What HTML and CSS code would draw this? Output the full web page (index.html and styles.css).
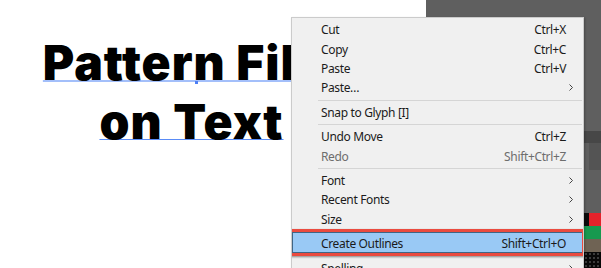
FILE: index.html
```html
<!DOCTYPE html>
<html lang="en">
  <head>
    <meta charset="UTF-8" />
    <meta name="viewport" content="width=device-width, initial-scale=1.0" />
    <title>Create Outlines</title>
    <link rel="stylesheet" href="styles.css">
  </head>
  <body>
    <div class="workspace">
      <div class="canvas">
        <h1 class="title">
          <span class="title-line first">Pattern Fills<i class="anchor"></i></span>
          <span class="title-line">on Text</span>
        </h1>
      </div>

      <div class="panel">
        <div class="panel-bar"></div>
        <div class="panel-box"></div>
        <div class="swatches">
          <div class="swatch-row"><span class="swatch black"></span><span class="swatch red"></span></div>
          <div class="swatch-row"><span class="swatch green"></span></div>
          <div class="swatch-row"><span class="swatch taupe"></span></div>
          <div class="swatch-row"><span class="swatch dots"></span></div>
        </div>
      </div>

      <ul class="context-menu">
        <li class="menu-item"><span class="label">Cut</span><span class="shortcut">Ctrl+X</span><span class="more"></span></li>
        <li class="menu-item"><span class="label">Copy</span><span class="shortcut">Ctrl+C</span><span class="more"></span></li>
        <li class="menu-item"><span class="label">Paste</span><span class="shortcut">Ctrl+V</span><span class="more"></span></li>
        <li class="menu-item"><span class="label">Paste…</span><span class="more"><svg width="4" height="7" viewBox="0 0 4 7"><path d="M0.5 0.5 L3.5 3.5 L0.5 6.5" /></svg></span></li>
        <li class="separator"></li>
        <li class="menu-item"><span class="label">Snap to Glyph [I]</span><span class="more"></span></li>
        <li class="separator"></li>
        <li class="menu-item"><span class="label">Undo Move</span><span class="shortcut">Ctrl+Z</span><span class="more"></span></li>
        <li class="menu-item disabled"><span class="label">Redo</span><span class="shortcut">Shift+Ctrl+Z</span><span class="more"></span></li>
        <li class="separator"></li>
        <li class="menu-item"><span class="label">Font</span><span class="more"><svg width="4" height="7" viewBox="0 0 4 7"><path d="M0.5 0.5 L3.5 3.5 L0.5 6.5" /></svg></span></li>
        <li class="menu-item"><span class="label">Recent Fonts</span><span class="more"><svg width="4" height="7" viewBox="0 0 4 7"><path d="M0.5 0.5 L3.5 3.5 L0.5 6.5" /></svg></span></li>
        <li class="menu-item"><span class="label">Size</span><span class="more"><svg width="4" height="7" viewBox="0 0 4 7"><path d="M0.5 0.5 L3.5 3.5 L0.5 6.5" /></svg></span></li>
        <li class="separator"></li>
        <li class="menu-item active"><span class="label">Create Outlines</span><span class="shortcut">Shift+Ctrl+O</span><span class="more"></span></li>
        <li class="separator"></li>
        <li class="menu-item"><span class="label">Spelling</span><span class="more"><svg width="4" height="7" viewBox="0 0 4 7"><path d="M0.5 0.5 L3.5 3.5 L0.5 6.5" /></svg></span></li>
      </ul>
    </div>
  </body>
</html>
```

FILE: styles.css
```css
* {
  margin: 0;
  padding: 0;
  box-sizing: border-box;
}

body {
  width: 601px;
  height: 268px;
  overflow: hidden;
  background: #fff;
}

.workspace {
  position: relative;
  display: flex;
  width: 601px;
  height: 268px;
}

/* artboard */
.canvas {
  flex: 0 0 426px;
  padding: 33px 43px 0 0;
  background: #fff;
}

.title {
  font-family: Inter, "Open Sans", sans-serif;
  font-weight: 900;
  font-size: 48px;
  line-height: 59px;
  letter-spacing: 1px;
  color: #000;
  text-align: center;
}

.title-line {
  position: relative;
  display: block;
  width: fit-content;
  margin: 0 auto;
  white-space: nowrap;
  text-decoration: underline 1px #5a8cf7;
  text-underline-offset: 0;
  text-decoration-skip-ink: none;
}

.title-line.first {
  text-decoration-color: #a3bffa;
  text-decoration-thickness: 2px;
}

.anchor {
  position: absolute;
  left: calc(50% + 3px);
  top: 48px;
  width: 3px;
  height: 3px;
  background: #4d7ff5;
}

/* right side panel */
.panel {
  flex: 1;
  display: flex;
  flex-direction: column;
  background: #5f5f5f;
}

.panel-bar {
  margin-top: 131px;
  height: 12px;
  background: #474747;
}

.panel-box {
  height: 27px;
  margin-left: 163px;
  background: #545454;
}

.swatches {
  margin-top: 43px;
  align-self: flex-end;
  width: 17px;
}

.swatch-row {
  display: flex;
  height: 13px;
}

.swatch {
  flex: 1;
}

.swatch.black {
  flex: 0 0 5px;
  background: #0b0b0b;
}

.swatch.red {
  background: #e4222b;
}

.swatch.green {
  background: #17994f;
}

.swatch.taupe {
  background: #6f6354;
}

.swatch-row:last-child {
  height: 16px;
}

.swatch.dots {
  background: radial-gradient(circle, #777 0.6px, transparent 0.8px) 0 0 / 4px 4px, #080808;
}

/* context menu */
.context-menu {
  position: absolute;
  left: 291px;
  top: 17px;
  width: 293px;
  height: 251px;
  overflow: hidden;
  list-style: none;
  padding-top: 2.33px;
  background: #f0f0f0;
  border: 1px solid #cbcbcb;
  border-bottom: none;
  box-shadow: 1px 1px 2px rgba(0, 0, 0, 0.25);
  font-family: "Noto Sans", sans-serif;
  font-size: 12px;
  letter-spacing: -0.35px;
  color: #1b1b1b;
}

.menu-item {
  position: relative;
  isolation: isolate;
  display: flex;
  align-items: center;
  height: 19.33px;
  padding-left: 29px;
  white-space: nowrap;
}

.menu-item .label {
  flex: 1;
}

.menu-item .more {
  display: flex;
  align-items: center;
  flex: 0 0 17px;
  padding-left: 3px;
}

.more svg path {
  fill: none;
  stroke: #444;
  stroke-width: 1;
}

.menu-item.disabled {
  color: #6d6d6d;
}

.separator {
  height: 1px;
  margin: 2.05px 1px 2.05px 26px;
  background: #d5d5d5;
}

.menu-item.active::before {
  content: "";
  position: absolute;
  z-index: -1;
  top: -2px;
  bottom: 0;
  left: 0;
  right: 0;
  background: #99c9f5;
  border: 1px solid #3f6585;
}

.menu-item.active::after {
  content: "";
  position: absolute;
  top: -5px;
  bottom: -3px;
  left: -3px;
  right: -2px;
  border: 3px solid #ea4b3f;
  box-shadow: 1px 1px 2px rgba(0, 0, 0, 0.45);
}
```
